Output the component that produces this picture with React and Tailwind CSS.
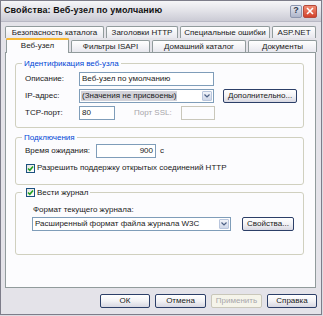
import React from "react";

const font = { fontFamily: '"Liberation Sans", Arial, sans-serif' };

function Tab({ w, children, selected }) {
  if (selected) {
    return (
      <div
        className="relative z-10 h-[15px] -mb-[1px] border border-b-0 border-[#919b9c] rounded-t-[2px] bg-[#fcfcfe] flex items-center justify-center text-[8px] text-[#1a1a1a]"
        style={{ width: w }}
      >
        <div className="absolute left-[-1px] right-[-1px] top-[-1px] h-[2px] rounded-t-[2px] bg-[#f9b934]" />
        {children}
      </div>
    );
  }
  return (
    <div
      className="h-[12px] border border-b-0 border-[#919b9c] rounded-t-[2px] bg-gradient-to-b from-[#ffffff] to-[#e8e8ee] flex items-center justify-center text-[8px] text-[#1a1a1a] leading-none"
      style={{ width: w }}
    >
      {children}
    </div>
  );
}

function Input({ w, children, align = "left", disabled }) {
  return (
    <div
      className={`h-[14px] border ${disabled ? "border-[#c9c7ba] bg-[#fcfcfe]" : "border-[#7f9db9] bg-white"} flex items-center px-[2px] text-[8px] text-[#1a1a1a] ${align === "right" ? "justify-end" : ""}`}
      style={{ width: w }}
    >
      {children}
    </div>
  );
}

function Combo({ w, children, highlight }) {
  return (
    <div
      className="h-[14px] border border-[#7f9db9] bg-white flex items-center pl-[1px] pr-[1px] text-[8px] text-[#1a1a1a]"
      style={{ width: w }}
    >
      <div className="flex-1 flex items-center">
        <span className={highlight ? "bg-[#d3d3da] px-[1px] leading-[10px]" : "px-[1px]"}>{children}</span>
      </div>
      <div className="w-[10px] h-[10px] rounded-[1px] border border-[#b9c6dd] bg-gradient-to-b from-[#f2f4f9] to-[#cfd7e8] flex items-center justify-center">
        <svg width="6" height="4" viewBox="0 0 6 4">
          <path d="M0.5 0.5 L3 3 L5.5 0.5" stroke="#4d6185" strokeWidth="1.2" fill="none" />
        </svg>
      </div>
    </div>
  );
}

function Button({ w, children, disabled }) {
  return (
    <div
      className={`h-[14px] rounded-[2px] border ${disabled ? "border-[#c9c7ba] text-[#a7a6aa] bg-[#f5f4ea]" : "border-[#2c3f68] text-[#1a1a1a] bg-gradient-to-b from-[#ffffff] via-[#f2f2f5] to-[#d8d8e2]"} flex items-center justify-center text-[8px]`}
      style={{ width: w }}
    >
      {children}
    </div>
  );
}

function Check() {
  return (
    <div className="w-[9px] h-[9px] border border-[#1c5180] bg-gradient-to-br from-[#e3e3dc] to-white flex items-center justify-center">
      <svg width="7" height="7" viewBox="0 0 7 7">
        <path d="M1 3.5 L2.8 5.3 L6 1.5" stroke="#21a121" strokeWidth="1.6" fill="none" />
      </svg>
    </div>
  );
}

function Group({ title, legendNode, h, mt, children }) {
  return (
    <div
      className="relative border border-[#d0d0bf] rounded-[3px] w-[289px]"
      style={{ height: h, marginTop: mt }}
    >
      <div className="absolute left-[6px] top-[-6px] bg-[#fcfcfe] px-[2px] h-[11px] flex items-center text-[8px] leading-none">
        {legendNode ? legendNode : <span className="text-[#0046d5]">{title}</span>}
      </div>
      {children}
    </div>
  );
}

export default function App() {
  return (
    <div className="w-[323px] h-[316px] bg-[#dcdce2] text-[#1a1a1a]" style={font}>
      <div className="w-[322px] h-[315px] border border-[#7d7d8a] bg-[#e4e3e9] flex flex-col">
        {/* Title bar */}
        <div className="h-[21px] bg-gradient-to-b from-[#f6f6f8] via-[#e2e2e8] to-[#cbcbd5] flex items-center pl-[3px] pr-[4px] border-b border-[#b8b8c4]">
          <div className="flex-1 text-[9px] font-bold tracking-[0.1px] text-[#111]">
            Свойства: Веб-узел по умолчанию
          </div>
          <div className="w-[12px] h-[13px] rounded-[2px] border border-[#8d96ae] bg-gradient-to-b from-[#e6e9f2] to-[#aeb5ca] flex items-center justify-center text-[9px] font-bold text-[#333a4d] mr-[1px]">
            ?
          </div>
          <div className="w-[14px] h-[13px] rounded-[2px] border border-[#b44a3c] bg-gradient-to-b from-[#f08b72] to-[#d2402a] flex items-center justify-center">
            <svg width="8" height="8" viewBox="0 0 8 8">
              <path d="M1 1 L7 7 M7 1 L1 7" stroke="white" strokeWidth="1.6" />
            </svg>
          </div>
        </div>

        {/* Tabs */}
        <div className="mt-[4px] flex gap-[2px] pl-[4px]">
          <Tab w={99}>Безопасность каталога</Tab>
          <Tab w={72}>Заголовки HTTP</Tab>
          <Tab w={90}>Специальные ошибки</Tab>
          <Tab w={44}>ASP.NET</Tab>
        </div>
        <div className="flex items-end gap-[2px] pl-[5px] -mt-[1px] h-[15px]">
          <Tab w={63} selected>Веб-узел</Tab>
          <Tab w={79}>Фильтры ISAPI</Tab>
          <Tab w={94}>Домашний каталог</Tab>
          <Tab w={69}>Документы</Tab>
        </div>

        {/* Panel */}
        <div className="ml-[4px] w-[311px] h-[236px] border border-[#919b9c] bg-[#fcfcfe] pl-[9px] pt-[10px] text-[8px]">
          <Group title="Идентификация веб-узла" h={65} mt={0}>
            <div className="flex flex-col gap-[3px] pt-[8px] pl-[9px]">
              <div className="flex items-center">
                <div className="w-[54px]">Описание:</div>
                <Input w={135}>Веб-узел по умолчанию</Input>
              </div>
              <div className="flex items-center">
                <div className="w-[54px]">IP-адрес:</div>
                <Combo w={135} highlight>(Значения не присвоены)</Combo>
                <div className="ml-[9px]">
                  <Button w={74}>Дополнительно...</Button>
                </div>
              </div>
              <div className="flex items-center">
                <div className="w-[54px]">TCP-порт:</div>
                <Input w={36}>80</Input>
                <div className="ml-[19px] w-[47px] text-[#a7a6aa]">Порт SSL:</div>
                <Input w={34} disabled></Input>
              </div>
            </div>
          </Group>

          <Group title="Подключения" h={48} mt={9}>
            <div className="pt-[6px] pl-[9px] flex items-center">
              <div className="w-[71px]">Время ожидания:</div>
              <Input w={60} align="right">900</Input>
              <div className="ml-[4px]">с</div>
            </div>
            <div className="mt-[4px] pl-[10px] flex items-center gap-[2px]">
              <Check />
              <div>Разрешить поддержку открытых соединений HTTP</div>
            </div>
          </Group>

          <Group
            h={63}
            mt={7}
            legendNode={
              <div className="flex items-center gap-[2px] pl-[2px]">
                <Check />
                <span>Вести журнал</span>
              </div>
            }
          >
            <div className="pt-[11px] pl-[17px]">Формат текущего журнала:</div>
            <div className="mt-[1px] pl-[16px] flex items-center">
              <Combo w={199}>Расширенный формат файла журнала W3C</Combo>
              <div className="ml-[11px]">
                <Button w={52}>Свойства...</Button>
              </div>
            </div>
          </Group>
        </div>

        {/* Bottom buttons */}
        <div className="mt-[6px] flex justify-end gap-[5px] pr-[4px]">
          <Button w={50}>ОК</Button>
          <Button w={51}>Отмена</Button>
          <Button w={51} disabled>Применить</Button>
          <Button w={50}>Справка</Button>
        </div>
      </div>
    </div>
  );
}
